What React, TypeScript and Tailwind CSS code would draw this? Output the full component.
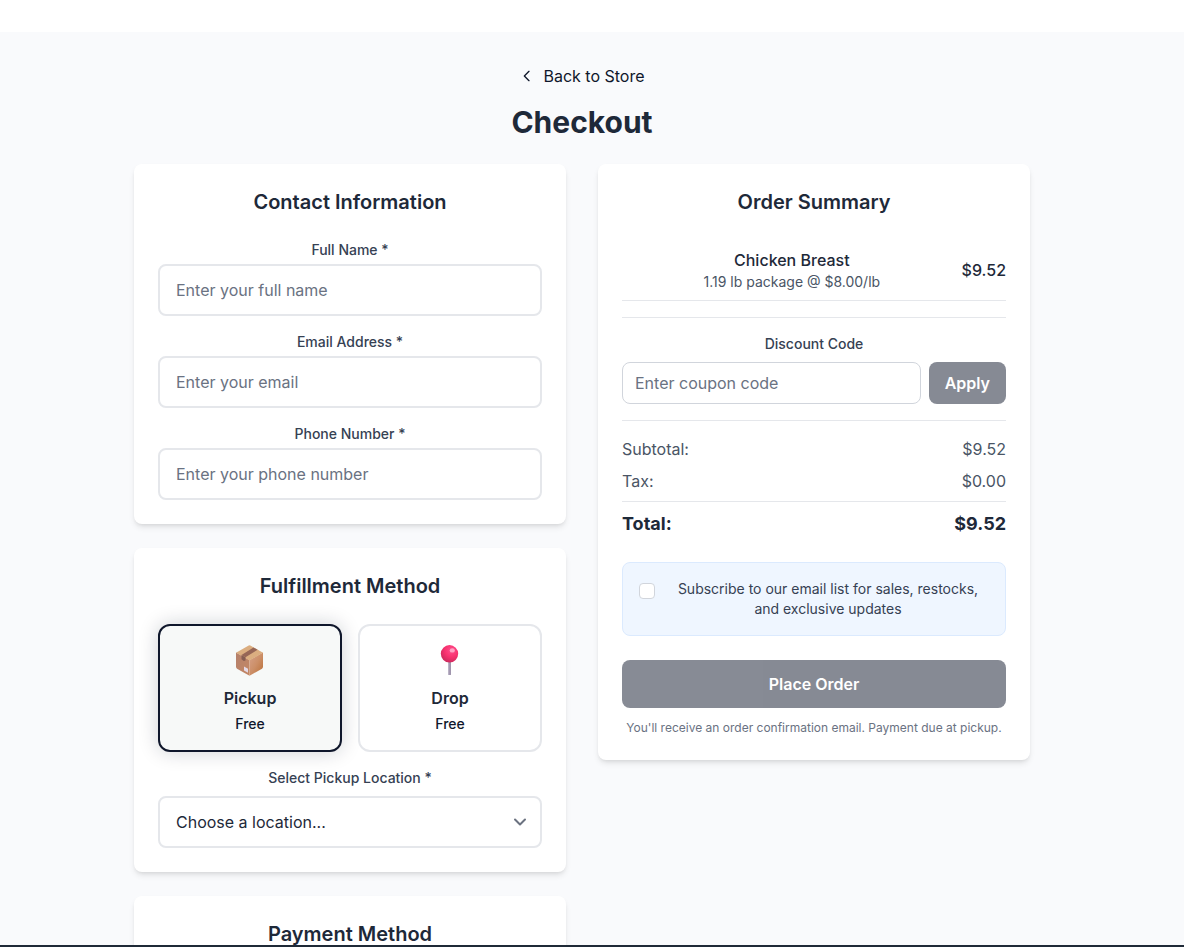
import { useState } from "react";
import type { ReactNode } from "react";

const fields = [
    { id: "name", label: "Full Name *", type: "text", placeholder: "Enter your full name" },
    { id: "email", label: "Email Address *", type: "email", placeholder: "Enter your email" },
    { id: "phone", label: "Phone Number *", type: "tel", placeholder: "Enter your phone number" },
];

const BoxIcon = () => (
    <svg viewBox="0 0 32 36" className="w-8 h-9" aria-hidden="true">
        <defs>
            <linearGradient id="boxLeft" x1="0" y1="0" x2="1" y2="1">
                <stop offset="0" stopColor="#b5816c" />
                <stop offset="1" stopColor="#c48764" />
            </linearGradient>
            <linearGradient id="boxRight" x1="0" y1="0" x2="1" y2="1">
                <stop offset="0" stopColor="#d6a28a" />
                <stop offset="0.5" stopColor="#cc8f68" />
                <stop offset="1" stopColor="#b96f36" />
            </linearGradient>
        </defs>
        <path d="M2 10.500 15.500 18V33.800L3 26.700Q2 26 2 24.800Z" fill="url(#boxLeft)" />
        <path d="M29 10.500 15.500 18V33.800L28 26.700Q29 26 29 24.800Z" fill="url(#boxRight)" />
        <path d="M14.700 3.500Q15.500 3 16.300 3.500L29 10.700 15.500 18.600 2 10.700Z" fill="#dbae80" />
        <path d="M19.500 5.500 23.500 7.800 11.500 15.200 7.500 13Z" fill="#966656" />
        <path d="M7.500 13 11.500 15.200V18.500L9.800 18.900 7.500 17.300Z" fill="#855d52" />
        <path d="M10 24.600 14 26.800V30.800L10 28.600Z" fill="#e5d9e6" />
    </svg>
);

const PinIcon = () => (
    <svg viewBox="0 0 32 36" className="w-8 h-9" aria-hidden="true">
        <defs>
            <radialGradient id="pinHead" cx="0.62" cy="0.3" r="0.7">
                <stop offset="0" stopColor="#ff4f8e" />
                <stop offset="0.55" stopColor="#f8326f" />
                <stop offset="1" stopColor="#cf2a5e" />
            </radialGradient>
            <linearGradient id="pinStem" x1="0" y1="0" x2="1" y2="0">
                <stop offset="0" stopColor="#b9b0c5" />
                <stop offset="1" stopColor="#8f839f" />
            </linearGradient>
        </defs>
        <rect x="14.100" y="19" width="2.800" height="14" rx="0.600" fill="url(#pinStem)" />
        <circle cx="15.500" cy="11.800" r="8.700" fill="url(#pinHead)" />
        <ellipse cx="18.300" cy="8.400" rx="2.600" ry="2.200" fill="#ffb3cf" opacity="0.85" />
    </svg>
);

const methods = [
    { id: "pickup", name: "Pickup", price: "Free", icon: <BoxIcon /> },
    { id: "drop", name: "Drop", price: "Free", icon: <PinIcon /> },
];

const Card = ({ title, children }: { title: string; children?: ReactNode }) => (
    <section className="bg-white rounded-lg shadow-md p-6">
        <h2 className="text-xl font-semibold mb-6">{title}</h2>
        {children}
    </section>
);

export default function App() {
    const [method, setMethod] = useState("pickup");

    return (
        <div className="h-screen overflow-y-auto [scrollbar-width:none] bg-white pt-8 font-['Inter',sans-serif] text-gray-800">
            <main className="min-h-full bg-[#f9fafc] py-8 pr-5 text-center">
                <div className="max-w-4xl mx-auto">
                    <a href="#" className="inline-flex items-center align-top mb-4 text-slate-900">
                        <svg className="w-4 h-4 mr-2" fill="none" stroke="currentColor" strokeWidth="2" viewBox="0 0 24 24">
                            <path strokeLinecap="round" strokeLinejoin="round" d="M15 19l-7-7 7-7" />
                        </svg>
                        Back to Store
                    </a>
                    <h1 className="text-3xl font-bold mb-6">Checkout</h1>

                    <div className="grid grid-cols-2 gap-8 items-start">
                        <div className="space-y-6">
                            <Card title="Contact Information">
                                <div className="space-y-4">
                                    {fields.map((f) => (
                                        <div key={f.id}>
                                            <label htmlFor={f.id} className="block text-sm font-medium text-gray-700 mb-1">
                                                {f.label}
                                            </label>
                                            <input
                                                id={f.id}
                                                type={f.type}
                                                placeholder={f.placeholder}
                                                className="block w-full border-2 border-gray-200 rounded-lg px-4 py-3 placeholder:text-gray-500"
                                            />
                                        </div>
                                    ))}
                                </div>
                            </Card>

                            <Card title="Fulfillment Method">
                                <div className="grid grid-cols-2 gap-4 mb-4">
                                    {methods.map((m) => (
                                        <button
                                            key={m.id}
                                            type="button"
                                            onClick={() => setMethod(m.id)}
                                            className={
                                                method === m.id
                                                    ? "flex flex-col items-center p-4 rounded-xl border-2 border-slate-900 bg-[#f7f9f8] shadow-[0_0_20px_rgba(15,23,42,0.2)]"
                                                    : "flex flex-col items-center p-4 rounded-xl border-2 border-gray-200 bg-white"
                                            }
                                        >
                                            {m.icon}
                                            <span className="mt-2 font-semibold">{m.name}</span>
                                            <span className="mt-1 text-sm font-medium text-slate-900">{m.price}</span>
                                        </button>
                                    ))}
                                </div>
                                <label htmlFor="location" className="block text-sm font-medium text-gray-700 mb-2">
                                    Select Pickup Location *
                                </label>
                                <div className="relative">
                                    <select
                                        id="location"
                                        className="block w-full appearance-none border-2 border-gray-200 rounded-lg bg-white px-4 py-3"
                                    >
                                        <option>Choose a location...</option>
                                    </select>
                                    <svg
                                        className="absolute right-3 top-4 w-5 h-5 pointer-events-none"
                                        viewBox="0 0 20 20"
                                        fill="none"
                                        stroke="#6b7280"
                                        strokeWidth="2"
                                    >
                                        <path strokeLinecap="round" strokeLinejoin="round" d="M5 7.500l5 5 5-5" />
                                    </svg>
                                </div>
                            </Card>

                            <Card title="Payment Method" />
                        </div>

                        <Card title="Order Summary">
                            <div className="flex items-center justify-between py-2 border-b border-gray-200 mb-4">
                                <div className="flex-1">
                                    <p className="font-medium">Chicken Breast</p>
                                    <p className="text-sm text-gray-600">1.19 lb package @ $8.00/lb</p>
                                </div>
                                <p className="font-medium">$9.52</p>
                            </div>

                            <div className="border-t border-gray-200 py-4">
                                <label htmlFor="coupon" className="block text-sm font-medium text-gray-700 mb-2">
                                    Discount Code
                                </label>
                                <div className="flex gap-2">
                                    <input
                                        id="coupon"
                                        type="text"
                                        placeholder="Enter coupon code"
                                        className="flex-1 min-w-0 border border-gray-300 rounded-lg px-3 py-2 placeholder:text-gray-500"
                                    />
                                    <button type="button" disabled className="bg-slate-900 text-white font-semibold rounded-lg px-4 opacity-50">
                                        Apply
                                    </button>
                                </div>
                            </div>

                            <div className="border-t border-gray-200 pt-4 mb-6">
                                <div className="flex justify-between text-gray-600 mb-2">
                                    <span>Subtotal:</span>
                                    <span>$9.52</span>
                                </div>
                                <div className="flex justify-between text-gray-600 mb-2">
                                    <span>Tax:</span>
                                    <span>$0.00</span>
                                </div>
                                <div className="flex justify-between border-t border-gray-200 pt-2 text-lg font-bold">
                                    <span>Total:</span>
                                    <span>$9.52</span>
                                </div>
                            </div>

                            <label className="flex items-start gap-3 bg-[#eff6ff] border border-[#dbeafe] rounded-lg p-4 mb-6">
                                <input
                                    type="checkbox"
                                    className="appearance-none shrink-0 w-4 h-4 mt-1 bg-white border border-gray-300 rounded checked:bg-slate-900"
                                />
                                <span className="flex-1 text-sm text-gray-700">
                                    Subscribe to our email list for sales, restocks, and exclusive updates
                                </span>
                            </label>

                            <button type="button" disabled className="w-full bg-slate-900 text-white font-semibold rounded-lg py-3 opacity-50">
                                Place Order
                            </button>
                            <p className="text-xs text-gray-500 mt-3">
                                You'll receive an order confirmation email. Payment due at pickup.
                            </p>
                        </Card>
                    </div>
                </div>
            </main>
            <div className="fixed inset-x-0 bottom-0 h-0.5 bg-[#1f2a37]" />
        </div>
    );
}
